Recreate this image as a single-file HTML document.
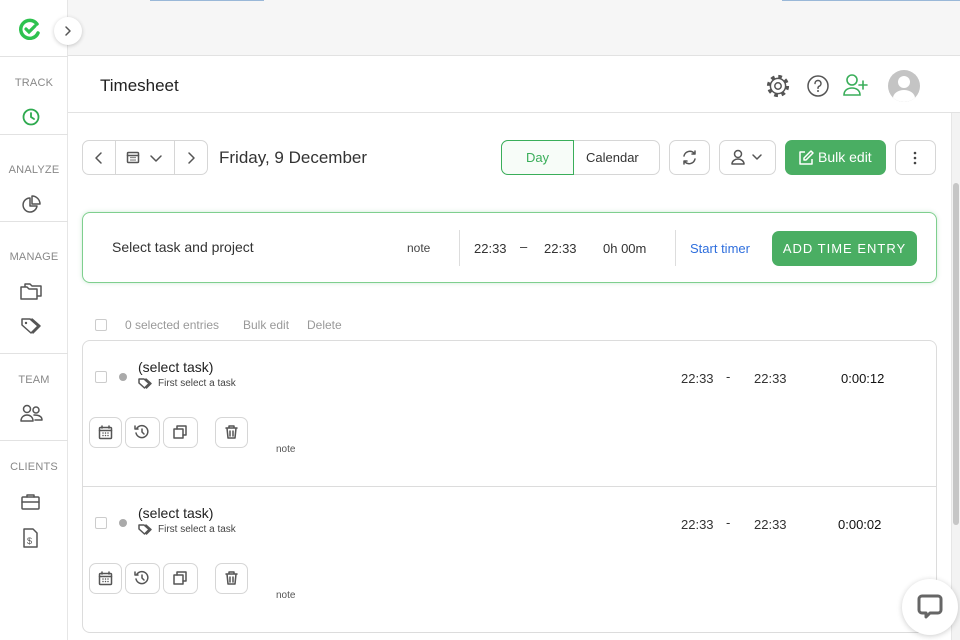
<!DOCTYPE html>
<html><head><meta charset="utf-8"><style>
*{box-sizing:border-box;margin:0;padding:0}
body{width:960px;height:640px;overflow:hidden;font-family:"Liberation Sans",sans-serif;color:#333;background:#fff;position:relative}
.a{position:absolute}
.side{left:0;top:0;width:68px;height:640px;background:#fff;border-right:1px solid #e6e6e6}
.lbl{width:68px;text-align:center;font-size:11px;color:#888;letter-spacing:.2px}
.hr{left:0;width:68px;height:1px;background:#e2e2e2}
.btn{border:1px solid #d6d6d6;border-radius:7px;background:#fff}
.ic{fill:none;stroke:#555;stroke-width:1.5;stroke-linecap:round;stroke-linejoin:round}
.t{font-size:13px;color:#333}
</style></head><body>
<div class="a" style="left:68px;top:0;width:892px;height:56px;background:#f6f6f6;border-bottom:1px solid #e2e2e2"></div>
<div class="a" style="left:150px;top:0;width:114px;height:1px;background:#9ab8d8"></div>
<div class="a" style="left:782px;top:0;width:178px;height:1px;background:#9ab8d8"></div>
<div class="a side"></div>
<svg class="a" style="left:19px;top:18px" width="22" height="22" viewBox="0 0 22 22"><path d="M18 6A9 9 0 1 0 19 15" fill="none" stroke="#2ec24f" stroke-width="3.5" stroke-linecap="round"/><path d="M7 11l3 3 6-6" fill="none" stroke="#2ec24f" stroke-width="3.2" stroke-linecap="round"/></svg>
<div class="a" style="left:54px;top:17px;width:28px;height:28px;border-radius:50%;background:#fff;box-shadow:0 1px 4px rgba(0,0,0,.2)"></div>
<svg class="a" style="left:62px;top:25px" width="12" height="12"><path d="M4 2l4 4-4 4" class="ic"/></svg>
<div class="a hr" style="top:56px"></div>
<div class="a lbl" style="top:77px">TRACK</div>
<svg class="a" style="left:22px;top:108px" width="18" height="18"><circle cx="9" cy="9" r="7.5" fill="none" stroke="#2eaa4f" stroke-width="1.8"/><path d="M9 5v4l3 2" fill="none" stroke="#2eaa4f" stroke-width="1.8" stroke-linecap="round"/></svg>
<div class="a hr" style="top:134px"></div>
<div class="a lbl" style="top:164px">ANALYZE</div>
<svg class="a" style="left:20px;top:194px" width="22" height="22"><path d="M10 4a7 7 0 1 0 7 8h-7z" class="ic"/><path d="M12 2v8h8a8 8 0 0 0-8-8z" class="ic"/></svg>
<div class="a hr" style="top:221px"></div>
<div class="a lbl" style="top:251px">MANAGE</div>
<svg class="a" style="left:19px;top:281px" width="24" height="20"><path d="M2 6h6l2 2h8v10H2z M6 6V3h5l2 2h9v10h-4" class="ic"/></svg>
<svg class="a" style="left:20px;top:316px" width="26" height="20"><path d="M2 3h8l8 7-7 7-9-8z M12 3l8 7-7 7" class="ic"/><circle cx="6" cy="7" r="1.2" fill="#555"/></svg>
<div class="a hr" style="top:353px"></div>
<div class="a lbl" style="top:374px">TEAM</div>
<svg class="a" style="left:20px;top:404px" width="24" height="18"><circle cx="7" cy="5" r="3.5" class="ic"/><circle cx="16" cy="6" r="3" class="ic"/><path d="M1 17c0-4 3-6 6-6s6 2 6 6z M14 11c4 0 8 1 8 5h-7" class="ic"/></svg>
<div class="a hr" style="top:440px"></div>
<div class="a lbl" style="top:461px">CLIENTS</div>
<svg class="a" style="left:20px;top:493px" width="22" height="18"><rect x="2" y="4" width="17" height="12" rx="1" class="ic"/><path d="M7 4V2h7v2 M2 9h17" class="ic"/></svg>
<svg class="a" style="left:22px;top:527px" width="18" height="22"><path d="M2 2h9l4 4v14H2z" class="ic"/><text x="5" y="17" font-size="9" fill="#555" font-family="Liberation Sans">$</text></svg>

<div class="a" style="left:68px;top:57px;width:892px;height:56px;background:#fff;border-bottom:1px solid #e2e2e2"></div>
<div class="a" style="left:100px;top:76px;font-size:17px;color:#222">Timesheet</div>
<svg class="a" style="left:765px;top:73px" width="26" height="26" viewBox="0 0 26 26"><circle cx="13" cy="13" r="9.5" fill="none" stroke="#555" stroke-width="3.2" stroke-dasharray="3.7 3.76"/><circle cx="13" cy="13" r="7.6" fill="#fff" stroke="#555" stroke-width="1.5"/><circle cx="13" cy="13" r="3.2" class="ic"/></svg>
<svg class="a" style="left:806px;top:74px" width="24" height="24"><circle cx="12" cy="12" r="10" class="ic"/><path d="M9 9.5a3 3 0 1 1 4 2.8c-1 .4-1 1-1 2" class="ic"/><circle cx="12" cy="17" r="1" fill="#555"/></svg>
<svg class="a" style="left:842px;top:73px" width="28" height="24"><circle cx="10" cy="7" r="5" fill="none" stroke="#3aae5a" stroke-width="1.6"/><path d="M2 22c0-5 4-7 8-7s8 2 8 7z M21 8v8 M17 12h8" fill="none" stroke="#3aae5a" stroke-width="1.6" stroke-linecap="round"/></svg>
<div class="a" style="left:888px;top:70px;width:32px;height:32px;border-radius:50%;background:#c4c4c4;overflow:hidden"><div class="a" style="left:10px;top:6px;width:12px;height:12px;border-radius:50%;background:#fff"></div><div class="a" style="left:5px;top:20px;width:22px;height:16px;border-radius:50%;background:#fff"></div></div>

<div class="a btn" style="left:82px;top:140px;width:126px;height:35px"></div>
<div class="a" style="left:115px;top:140px;width:1px;height:35px;background:#d6d6d6"></div>
<div class="a" style="left:174px;top:140px;width:1px;height:35px;background:#d6d6d6"></div>
<svg class="a" style="left:92px;top:151px" width="14" height="14"><path d="M9 2L4 7l5 5" class="ic"/></svg>
<svg class="a" style="left:126px;top:150px" width="14" height="14"><rect x="1.5" y="2.5" width="11" height="10" rx="1" class="ic" stroke-width="1.2"/><path d="M1.5 5.5h11 M5 7.5h0M7 7.5h0M9 7.5h0M5 10h0M7 10h0M9 10h0" class="ic" stroke-width="1.3"/></svg>
<svg class="a" style="left:149px;top:151px" width="14" height="14"><path d="M2 5l5 5 5-5" class="ic" stroke-width="1.3"/></svg>
<svg class="a" style="left:184px;top:151px" width="14" height="14"><path d="M5 2l5 5-5 5" class="ic"/></svg>
<div class="a" style="left:219px;top:148px;font-size:17px;color:#333">Friday, 9 December</div>

<div class="a" style="left:501px;top:140px;width:159px;height:35px;border:1px solid #d6d6d6;border-radius:7px"></div>
<div class="a" style="left:501px;top:140px;width:73px;height:35px;border:1px solid #3aae5a;border-radius:7px 0 0 7px;background:#f7fcf8;color:#3aae5a;font-size:13px;text-align:center;line-height:33px">Day</div>
<div class="a t" style="left:586px;top:150px">Calendar</div>
<div class="a btn" style="left:669px;top:140px;width:41px;height:35px"></div>
<svg class="a" style="left:681px;top:149px" width="17" height="17"><path d="M3 7a6 6 0 0 1 10-3l1 1 M14 2v3h-3 M14 10a6 6 0 0 1-10 3l-1-1 M3 15v-3h3" class="ic" stroke-width="1.3"/></svg>
<div class="a btn" style="left:719px;top:140px;width:57px;height:35px"></div>
<svg class="a" style="left:730px;top:149px" width="34" height="16"><circle cx="8" cy="5" r="3.5" class="ic" stroke-width="1.3"/><path d="M2 15c0-3 3-5 6-5s6 2 6 5z M23 6l4 4 4-4" class="ic" stroke-width="1.3"/></svg>
<div class="a" style="left:785px;top:140px;width:101px;height:35px;border-radius:7px;background:#4aae63;color:#fff;font-size:14px;line-height:35px;padding-left:33px">Bulk edit</div>
<svg class="a" style="left:797px;top:149px" width="18" height="17"><path d="M8 3H3v12h12v-5 M14 2l2 2-7 7H7V9z" fill="none" stroke="#fff" stroke-width="1.5" stroke-linejoin="round"/></svg>
<div class="a btn" style="left:895px;top:140px;width:41px;height:35px"></div>
<svg class="a" style="left:912px;top:150px" width="6" height="16"><circle cx="3" cy="3" r="1.3" fill="#444"/><circle cx="3" cy="8" r="1.3" fill="#444"/><circle cx="3" cy="13" r="1.3" fill="#444"/></svg>

<div class="a" style="left:82px;top:212px;width:855px;height:71px;border:1px solid #7fcf8e;border-radius:8px;box-shadow:0 0 4px rgba(60,170,90,.25);background:#fff"></div>
<div class="a" style="left:112px;top:239px;font-size:14px;color:#333">Select task and project</div>
<div class="a" style="left:407px;top:241px;font-size:12px;color:#444">note</div>
<div class="a" style="left:459px;top:230px;width:1px;height:36px;background:#ddd"></div>
<div class="a t" style="left:474px;top:241px">22:33</div>
<div class="a t" style="left:520px;top:239px">–</div>
<div class="a t" style="left:544px;top:241px">22:33</div>
<div class="a t" style="left:603px;top:241px">0h 00m</div>
<div class="a" style="left:675px;top:230px;width:1px;height:36px;background:#ddd"></div>
<div class="a" style="left:690px;top:241px;font-size:13px;color:#2f6fdd">Start timer</div>
<div class="a" style="left:772px;top:231px;width:145px;height:35px;border-radius:7px;background:#4aae63;color:#fff;font-size:13px;letter-spacing:1px;text-align:center;line-height:35px">ADD TIME ENTRY</div>

<div class="a" style="left:95px;top:319px;width:12px;height:12px;border:1px solid #ccc;border-radius:2px"></div>
<div class="a" style="left:125px;top:318px;font-size:12px;color:#999">0 selected entries</div>
<div class="a" style="left:243px;top:318px;font-size:12px;color:#999">Bulk edit</div>
<div class="a" style="left:307px;top:318px;font-size:12px;color:#999">Delete</div>

<div class="a" style="left:82px;top:340px;width:855px;height:293px;border:1px solid #dcdcdc;border-radius:8px"></div>
<div class="a" style="left:83px;top:486px;width:853px;height:1px;background:#dcdcdc"></div>

<!-- entry 1 -->
<div class="a" style="left:95px;top:371px;width:12px;height:12px;border:1px solid #ccc;border-radius:2px"></div>
<div class="a" style="left:119px;top:373px;width:8px;height:8px;border-radius:50%;background:#aaa"></div>
<div class="a" style="left:138px;top:359px;font-size:14px;color:#222">(select task)</div>
<svg class="a" style="left:138px;top:378px" width="14" height="11"><path d="M1 1h5l5 4.5-4.5 4.5L1 5z M8 1l5 4.5-4.5 4.5" class="ic" stroke-width="1.1"/></svg>
<div class="a" style="left:158px;top:378px;font-size:10px;color:#444">First select a task</div>
<div class="a t" style="left:681px;top:371px">22:33</div>
<div class="a t" style="left:726px;top:369px">-</div>
<div class="a t" style="left:754px;top:371px">22:33</div>
<div class="a" style="left:841px;top:371px;font-size:13px;color:#111">0:00:12</div>
<div class="a btn" style="left:89px;top:417px;width:33px;height:31px"></div>
<div class="a btn" style="left:125px;top:417px;width:35px;height:31px"></div>
<div class="a btn" style="left:163px;top:417px;width:35px;height:31px"></div>
<div class="a btn" style="left:215px;top:417px;width:33px;height:31px"></div>
<svg class="a" style="left:98px;top:425px" width="15" height="15"><rect x="1.5" y="2.5" width="12" height="11" rx="1" class="ic" stroke-width="1.2"/><path d="M1.5 5.5h12 M4 1v2 M11 1v2 M5 8h0M7.5 8h0M10 8h0M5 10.5h0M7.5 10.5h0M10 10.5h0" class="ic" stroke-width="1.3"/></svg>
<svg class="a" style="left:134px;top:424px" width="16" height="16"><path d="M3 4a6 6 0 1 1-1 5 M1 2v3h3 M8 5v3l2 2" class="ic" stroke-width="1.3"/></svg>
<svg class="a" style="left:172px;top:424px" width="16" height="16"><rect x="2" y="5" width="9" height="9" class="ic" stroke-width="1.3"/><path d="M5 5V2h9v9h-3" class="ic" stroke-width="1.3"/></svg>
<svg class="a" style="left:224px;top:424px" width="15" height="16"><path d="M2 4h11 M5 4V2h5v2 M3 4l1 10h7l1-10 M6 7v5 M9 7v5" class="ic" stroke-width="1.3"/></svg>
<div class="a" style="left:276px;top:444px;font-size:10px;color:#555">note</div>

<!-- entry 2 -->
<div class="a" style="left:95px;top:517px;width:12px;height:12px;border:1px solid #ccc;border-radius:2px"></div>
<div class="a" style="left:119px;top:519px;width:8px;height:8px;border-radius:50%;background:#aaa"></div>
<div class="a" style="left:138px;top:505px;font-size:14px;color:#222">(select task)</div>
<svg class="a" style="left:138px;top:524px" width="14" height="11"><path d="M1 1h5l5 4.5-4.5 4.5L1 5z M8 1l5 4.5-4.5 4.5" class="ic" stroke-width="1.1"/></svg>
<div class="a" style="left:158px;top:524px;font-size:10px;color:#444">First select a task</div>
<div class="a t" style="left:681px;top:517px">22:33</div>
<div class="a t" style="left:726px;top:515px">-</div>
<div class="a t" style="left:754px;top:517px">22:33</div>
<div class="a" style="left:838px;top:517px;font-size:13px;color:#111">0:00:02</div>
<div class="a btn" style="left:89px;top:563px;width:33px;height:31px"></div>
<div class="a btn" style="left:125px;top:563px;width:35px;height:31px"></div>
<div class="a btn" style="left:163px;top:563px;width:35px;height:31px"></div>
<div class="a btn" style="left:215px;top:563px;width:33px;height:31px"></div>
<svg class="a" style="left:98px;top:571px" width="15" height="15"><rect x="1.5" y="2.5" width="12" height="11" rx="1" class="ic" stroke-width="1.2"/><path d="M1.5 5.5h12 M4 1v2 M11 1v2 M5 8h0M7.5 8h0M10 8h0M5 10.5h0M7.5 10.5h0M10 10.5h0" class="ic" stroke-width="1.3"/></svg>
<svg class="a" style="left:134px;top:570px" width="16" height="16"><path d="M3 4a6 6 0 1 1-1 5 M1 2v3h3 M8 5v3l2 2" class="ic" stroke-width="1.3"/></svg>
<svg class="a" style="left:172px;top:570px" width="16" height="16"><rect x="2" y="5" width="9" height="9" class="ic" stroke-width="1.3"/><path d="M5 5V2h9v9h-3" class="ic" stroke-width="1.3"/></svg>
<svg class="a" style="left:224px;top:570px" width="15" height="16"><path d="M2 4h11 M5 4V2h5v2 M3 4l1 10h7l1-10 M6 7v5 M9 7v5" class="ic" stroke-width="1.3"/></svg>
<div class="a" style="left:276px;top:590px;font-size:10px;color:#555">note</div>

<div class="a" style="left:951px;top:113px;width:9px;height:527px;background:#f3f3f3;border-left:1px solid #e6e6e6"></div>
<div class="a" style="left:953px;top:183px;width:6px;height:342px;border-radius:3px;background:#c6c6c6"></div>
<div class="a" style="left:902px;top:579px;width:56px;height:56px;border-radius:50%;background:#fff;box-shadow:0 1px 6px rgba(0,0,0,.2)"></div>
<svg class="a" style="left:916px;top:593px" width="28" height="28"><path d="M6 3h16a3 3 0 0 1 3 3v11a3 3 0 0 1-3 3h-8l-4 4v-4H6a3 3 0 0 1-3-3V6a3 3 0 0 1 3-3z" fill="none" stroke="#666" stroke-width="3" stroke-linejoin="round"/></svg>
</body></html>
